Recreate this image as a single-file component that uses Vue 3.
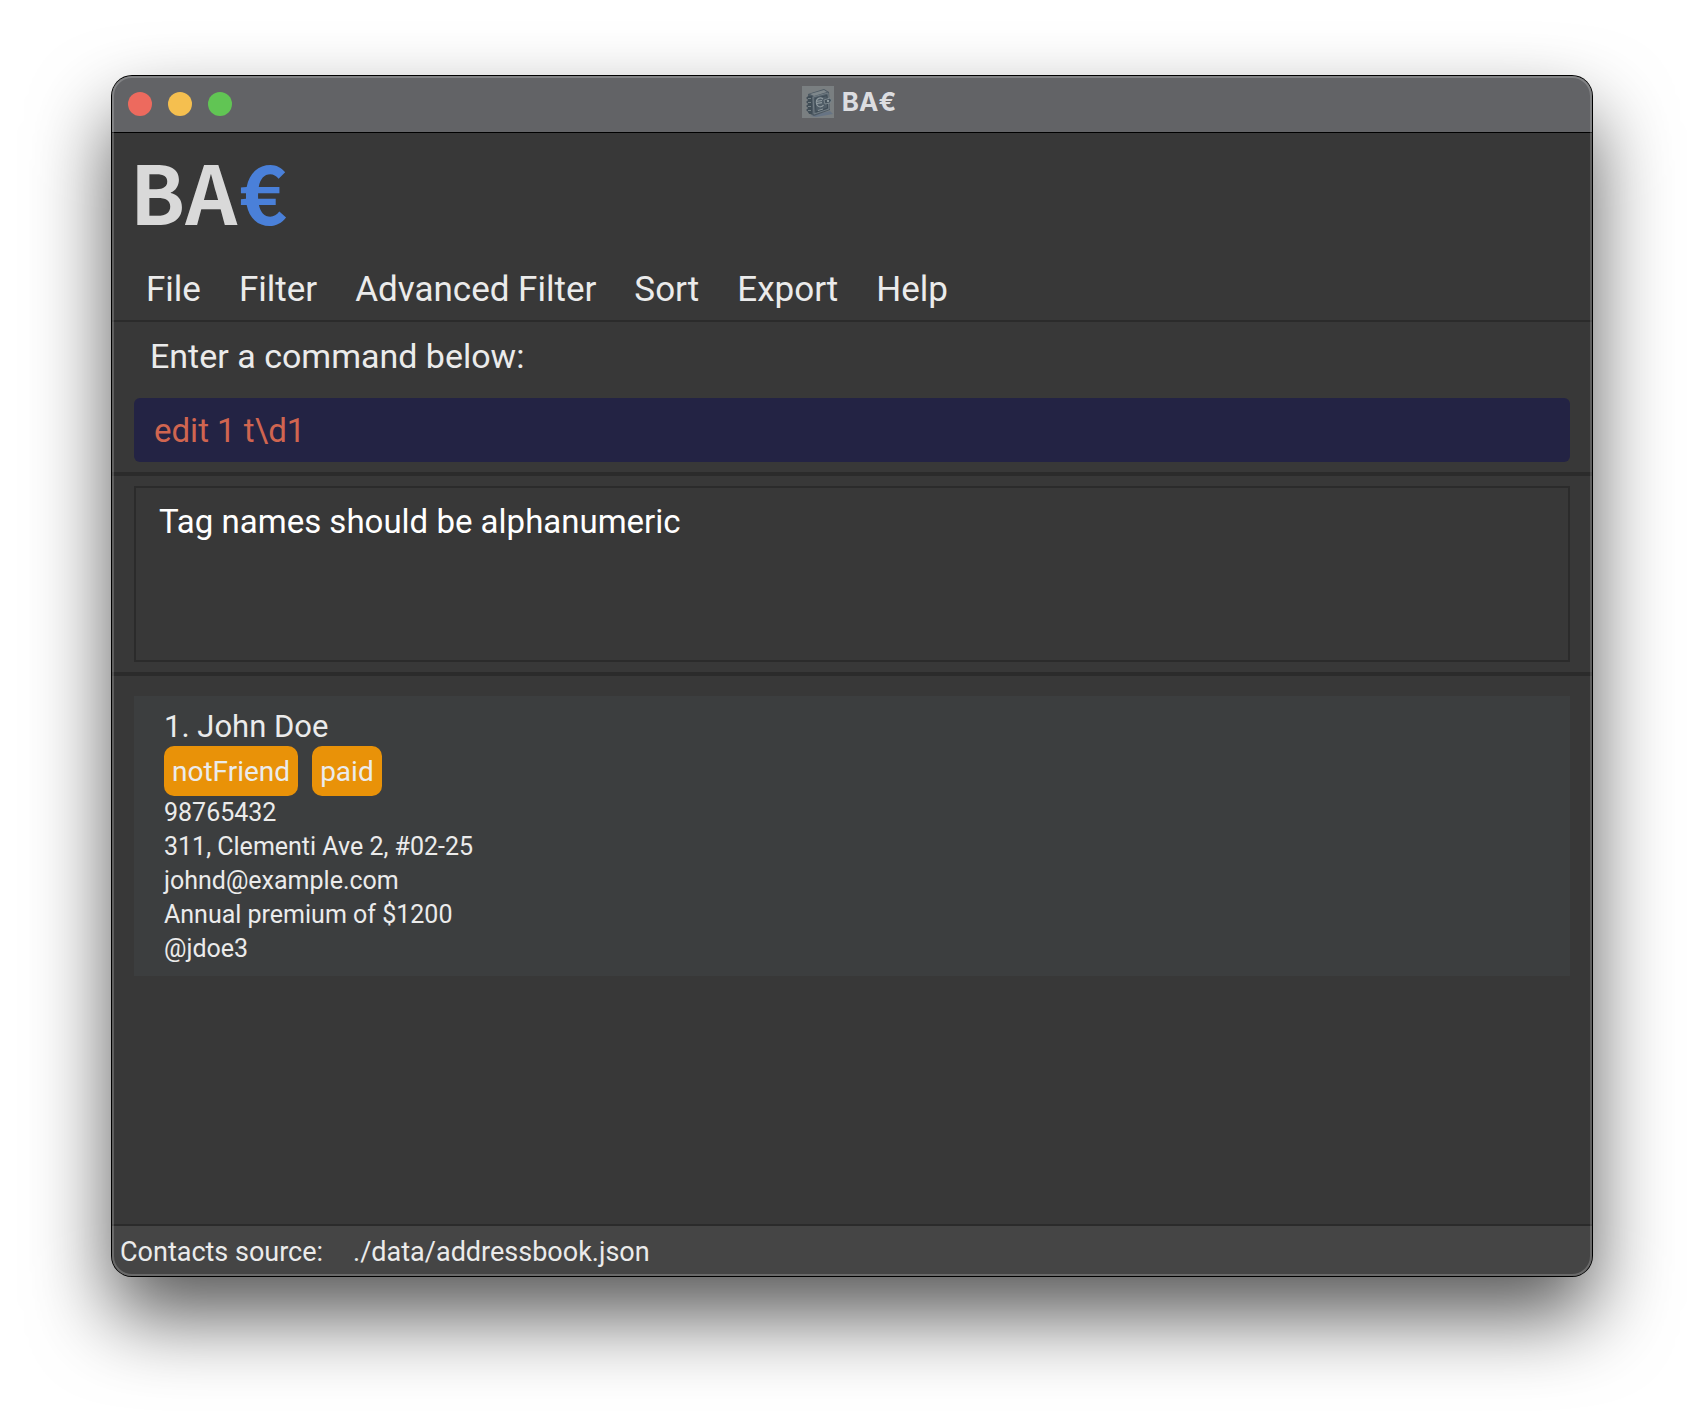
<script setup>
import { ref } from 'vue'

const menus = ['File', 'Filter', 'Advanced Filter', 'Sort', 'Export', 'Help']
const command = ref('edit 1 t\\d1')
const result = 'Tag names should be alphanumeric'
const contacts = [
  {
    name: 'John Doe',
    tags: ['notFriend', 'paid'],
    details: [
      '98765432',
      '311, Clementi Ave 2, #02-25',
      'johnd@example.com',
      'Annual premium of $1200',
      '@jdoe3',
    ],
  },
]
</script>

<template>
  <div class="desktop">
    <div class="window">
      <header class="titlebar">
        <div class="lights">
          <button type="button" class="light close" aria-label="Close"></button>
          <button type="button" class="light minimise" aria-label="Minimise"></button>
          <button type="button" class="light zoom" aria-label="Zoom"></button>
        </div>
        <div class="title">
          <svg width="32" height="32" viewBox="0 0 32 32" aria-hidden="true">
            <rect width="32" height="32" fill="#7a7f81" />
            <path d="M8 30 L28 25 L31 28 L14 31 Z" fill="#677484" />
            <path d="M6 8 L22 3 L27 6 L28 24 L12 30 L6 27 Z" fill="#4d5963" />
            <path d="M8 8 L22 4 L25 6 L12 10 Z" fill="#7e878b" />
            <path d="M11 11 L26 7 L27 23 L12 28 Z" fill="#505d67" stroke="#818b90" stroke-width="0.7" />
            <path d="M13 12.500 L25 9.500 L25.500 22 L14 26 Z" fill="none" stroke="#3b4852" stroke-width="0.8" />
            <path d="M21 13 A4 4.500 0 1 0 21.500 19 M14 15.500 L20 14.500 M14 17.700 L20 16.700" fill="none" stroke="#8f9a9f" stroke-width="1.200" />
            <path d="M22 14 L28 12 Q31 14 28 17 L23 18 Z" fill="#44515b" stroke="#879297" stroke-width="0.8" />
            <circle cx="26" cy="15" r="1.200" fill="#8f9a9f" />
            <path d="M16 24.500 L21 23" stroke="#8a9599" stroke-width="1" />
            <path d="M10 11 H6 Q4 12 6 13 H10 M10 15 H6 Q4 16 6 17 H10 M10 19 H6 Q4 20 6 21 H10 M10 23 H6 Q4 24 6 25 H10 M10 27 H7" fill="none" stroke="#3d4a53" stroke-width="1.300" />
            <path d="M9 12.500 H6 M9 16.500 H6 M9 20.500 H6 M9 24.500 H6" stroke="#8d979a" stroke-width="0.7" />
          </svg>
          <span>BA€</span>
        </div>
      </header>

      <h1 class="logo">BA<span class="euro">€</span></h1>

      <nav class="menubar">
        <button v-for="menu in menus" :key="menu" type="button">{{ menu }}</button>
      </nav>

      <section class="command">
        <label for="command">Enter a command below:</label>
        <input id="command" v-model="command" type="text" spellcheck="false" autocomplete="off" />
      </section>

      <section class="result">
        <textarea readonly aria-label="Result" :value="result"></textarea>
      </section>

      <ol class="contacts">
        <li v-for="(contact, index) in contacts" :key="contact.name" class="card">
          <h2>{{ index + 1 }}. {{ contact.name }}</h2>
          <div class="tags">
            <span v-for="tag in contact.tags" :key="tag" class="tag">{{ tag }}</span>
          </div>
          <p v-for="line in contact.details" :key="line">{{ line }}</p>
        </li>
      </ol>

      <footer class="status">
        <span>Contacts source:</span>
        <span>./data/addressbook.json</span>
      </footer>
    </div>
  </div>
</template>

<style>
body {
  margin: 0;
  background: #fff;
}
</style>

<style scoped>
.desktop {
  box-sizing: border-box;
  display: flex;
  min-height: 100vh;
  padding: 76px 112px 148px;
  overflow: hidden;
  font-family: Roboto, 'Liberation Sans', sans-serif;
  color: #ebebeb;
}

.window {
  position: relative;
  display: flex;
  flex: 1;
  flex-direction: column;
  min-width: 0;
  border-radius: 20px;
  background: #383838;
  box-shadow: 0 0 0 1px #000, 0 40px 80px rgba(0, 0, 0, 0.66);
}

.window::after {
  content: '';
  position: absolute;
  inset: 0;
  border: 2px solid rgba(255, 255, 255, 0.2);
  border-radius: 20px;
  pointer-events: none;
}

.titlebar {
  display: grid;
  grid-template-columns: 1fr auto 1fr;
  align-items: center;
  height: 56px;
  padding: 0 16px;
  border-bottom: 1px solid #000;
  border-radius: 20px 20px 0 0;
  background: #626366;
}

.lights {
  display: flex;
  gap: 16px;
}

.light {
  width: 24px;
  height: 24px;
  padding: 0;
  border: 0;
  border-radius: 50%;
}

.close {
  background: #ed6a5e;
}

.minimise {
  background: #f5bf4f;
}

.zoom {
  background: #61c554;
}

.title {
  display: flex;
  align-items: center;
  gap: 8px;
  padding: 0 6px 4px 0;
  font-family: Inter, sans-serif;
  font-size: 26px;
  font-weight: 700;
  line-height: 32px;
  color: #dcdde0;
}

.title svg {
  display: block;
}

.logo {
  display: flex;
  gap: 2px;
  margin: 0;
  padding: 8px 18px 4px;
  font-family: 'Noto Sans CJK SC', sans-serif;
  font-size: 81px;
  font-weight: 700;
  line-height: 97px;
  color: #d9d9d9;
}

.euro {
  color: #4a80d9;
}

.menubar {
  display: flex;
  gap: 38px;
  padding: 26px 34px 8px;
  border-bottom: 2px solid #2b2b2b;
}

.menubar button {
  padding: 0;
  border: 0;
  background: none;
  font: inherit;
  font-size: 35px;
  line-height: 44px;
  color: inherit;
}

.command {
  display: flex;
  flex-direction: column;
  padding: 12px 22px 10px;
  border-bottom: 4px solid #2b2b2b;
}

.command label {
  padding: 0 16px 20px;
  font-size: 34px;
  line-height: 44px;
}

.command input {
  box-sizing: border-box;
  width: 100%;
  height: 64px;
  padding: 0 20px;
  border: 0;
  border-radius: 6px;
  outline: 0;
  background: #232344;
  font: inherit;
  font-size: 33px;
  color: #d06550;
}

.result {
  display: flex;
  padding: 10px 22px;
  border-bottom: 4px solid #2b2b2b;
}

.result textarea {
  box-sizing: border-box;
  width: 100%;
  height: 176px;
  padding: 12px 23px;
  border: 2px solid #2b2b2b;
  outline: 0;
  resize: none;
  background: none;
  font: inherit;
  font-size: 33px;
  line-height: 44px;
  color: #fff;
}

.contacts {
  flex: 1;
  margin: 0;
  padding: 20px 22px;
  list-style: none;
}

.card {
  padding: 12px 30px 10px;
  background: #3c3e3f;
}

.card h2 {
  margin: 0;
  font-size: 31px;
  font-weight: 400;
  line-height: 38px;
}

.tags {
  display: flex;
  gap: 14px;
}

.tag {
  padding: 2px 8px 0;
  border-radius: 10px;
  background: #e99208;
  font-size: 28px;
  line-height: 48px;
}

.card p {
  margin: 0;
  font-size: 25px;
  line-height: 34px;
}

.status {
  display: flex;
  gap: 30px;
  padding: 4px 8px 2px;
  border-top: 2px solid #2b2b2b;
  border-radius: 0 0 20px 20px;
  background: #454545;
  font-size: 27px;
  line-height: 44px;
}
</style>
